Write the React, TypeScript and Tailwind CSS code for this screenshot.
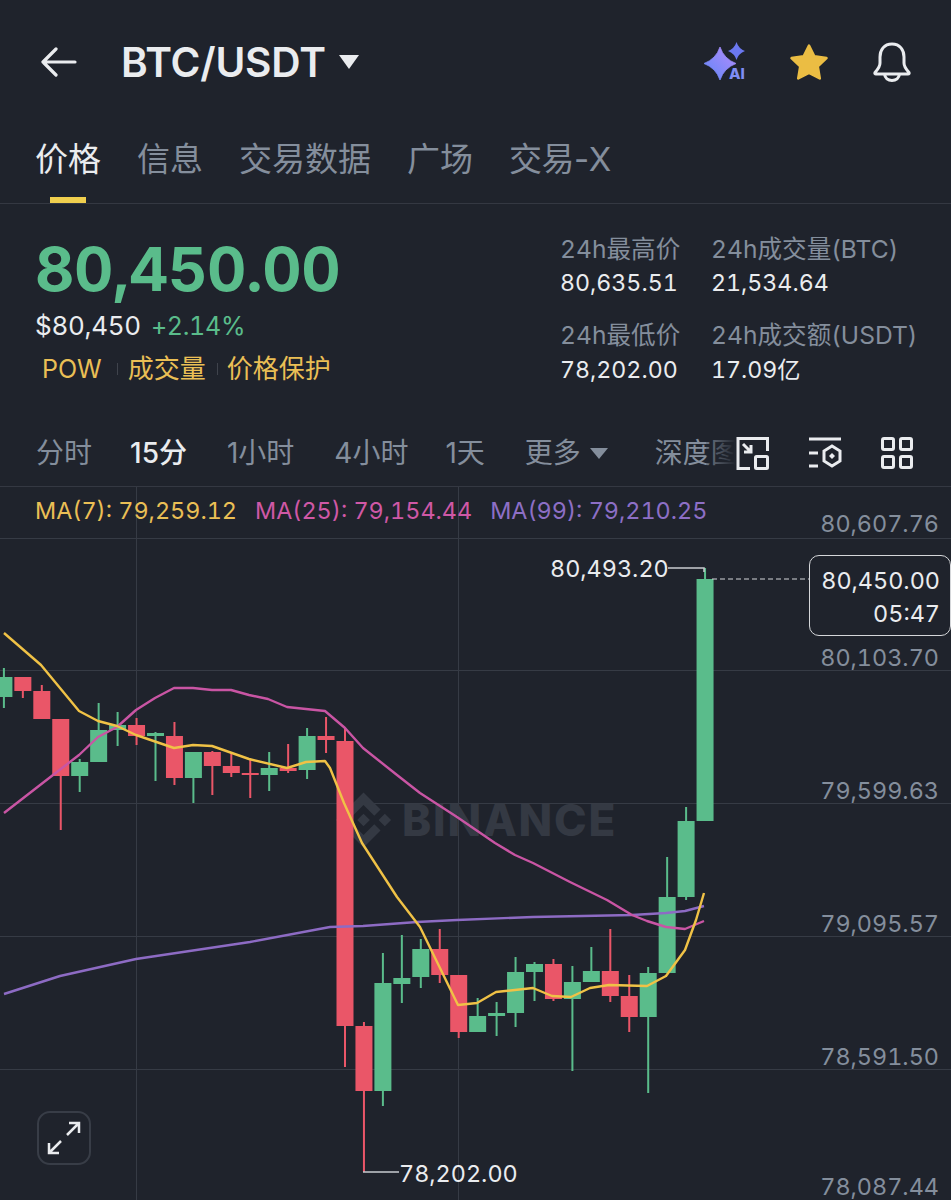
import React from "react";

type C = [number, number, number, number, "g" | "r"];
const candles: C[] = [
  [668, 677, 697, 708, "g"],[677, 677, 691, 698, "r"],[685, 691, 719, 719, "r"],[719, 719, 776, 830, "r"],
  [759, 762, 776, 792, "g"],[703, 730, 762, 762, "g"],[712, 725, 730, 746, "g"],[718, 725, 736, 745, "r"],
  [732, 733, 736, 781, "g"],[722, 736, 778, 785, "r"],[752, 752, 778, 803, "g"],[751, 752, 766, 795, "r"],
  [753, 766, 773, 777, "r"],[760, 773, 775, 798, "r"],[752, 768, 775, 791, "g"],[744, 768, 771, 773, "r"],
  [728, 736, 770, 779, "g"],[717, 736, 740, 753, "r"],[728, 741, 1026, 1067, "r"],[1022, 1026, 1091, 1172, "r"],
  [953, 983, 1091, 1106, "g"],[935, 978, 984, 1003, "g"],[939, 949, 977, 988, "g"],[929, 949, 975, 983, "r"],
  [975, 975, 1032, 1038, "r"],[998, 1016, 1032, 1032, "g"],[1002, 1013, 1016, 1036, "g"],[957, 972, 1013, 1027, "g"],
  [962, 964, 972, 1001, "g"],[959, 964, 999, 1001, "r"],[966, 982, 999, 1071, "g"],[947, 971, 982, 982, "g"],
  [929, 971, 996, 1002, "r"],[975, 996, 1017, 1032, "r"],[967, 973, 1017, 1093, "g"],[857, 897, 973, 973, "g"],
  [807, 821, 897, 900, "g"],[568, 579, 821, 821, "g"],
];
const GREEN = "#5abc8b";
const RED = "#ea5668";
const ma7 = "4,633 41,665 60,688 79,711 98,721 117,726 136,735 174,748 193,745 212,746 249,759 287,768 306,762 325,761 330,768 344,803 362,843 397,897 420,927 458,1005 477,1003 496,992 533,988 552,996 571,997 590,988 609,985 647,986 666,976 685,950 696,920 704,893";
const ma25 = "4,813 53,775 79,755 98,737 117,727 136,710 155,698 174,688 193,688 212,690 231,690 249,695 268,699 287,707 306,709 325,711 345,728 363,748 397,775 420,793 457,817 495,843 515,855 533,863 570,882 607,900 632,915 647,921 666,927 685,929 704,921";
const ma99 = "4,994 60,976 136,959 250,942 330,927 363,926 417,922 457,920 533,917 632,915 666,913 685,911 704,906";

const hLines = [538, 670, 803, 936, 1069];
const axis: [string, string][] = [
  ["80,607.76", "top-[25px]"],["80,103.70", "top-[159px]"],["79,599.63", "top-[292px]"],
  ["79,095.57", "top-[425px]"],["78,591.50", "top-[558px]"],["78,087.44", "top-[688px]"],
];
const sans = "font-['Inter','Noto_Sans_CJK_SC',sans-serif]";

function Chart() {
  return (
    <svg className="absolute inset-0" width="951" height="713" viewBox="0 487 951 713">
      {hLines.map((y) => <line key={y} x1="0" x2="951" y1={y + 0.5} y2={y + 0.5} stroke="#363b45" strokeWidth="1" />)}
      {[136, 458].map((x) => <line key={x} x1={x + 0.5} x2={x + 0.5} y1="487" y2="1200" stroke="#363b45" strokeWidth="1" />)}
      <g fill="#343943">
        <path
          transform="translate(336 792.5) scale(0.437)"
          d="M38.4 53.2 63 28.6l24.6 24.6 14.3-14.3L63 0 24.1 38.9zM0 63l14.3-14.3L28.6 63 14.3 77.3zM38.4 72.8 63 97.4l24.6-24.6 14.3 14.3L63 126 24.1 87.1zM97.4 63l14.3-14.3L126 63l-14.3 14.3zM77.500 63 63 48.500 52.300 59.200l-1.200 1.200L48.600 63 63 77.400 77.500 63z"
        />
        <text x="402" y="836" fontFamily="Inter, sans-serif" fontWeight="800" fontSize="44" letterSpacing="1.8">BINANCE</text>
      </g>
      {candles.map(([h, t, b, l, k], i) => {
        const x = 3.9 + 18.95 * i;
        const c = k === "g" ? GREEN : RED;
        return (
          <g key={i} fill={c}>
            <rect x={x - 1} y={h} width="2" height={l - h} />
            <rect x={x - 8.5} y={t} width="17" height={b - t} />
          </g>
        );
      })}
      <polyline points={ma99} fill="none" stroke="#8d6bc4" strokeWidth="2.4" strokeLinejoin="round" />
      <polyline points={ma25} fill="none" stroke="#c955a4" strokeWidth="2.4" strokeLinejoin="round" />
      <polyline points={ma7} fill="none" stroke="#f0c246" strokeWidth="2.4" strokeLinejoin="round" />
      <line x1="712" x2="809" y1="579" y2="579" stroke="#d5d7da" strokeWidth="1" strokeDasharray="5 3" />
      <path d="M668 568H704V572" fill="none" stroke="#c9ccd0" strokeWidth="1.5" />
      <path d="M363 1172H399" fill="none" stroke="#c9ccd0" strokeWidth="1.5" />
    </svg>
  );
}

function AiIcon() {
  return (
    <svg width="44" height="40" viewBox="0 0 44 40">
      <defs>
        <linearGradient id="ai" x1="0" y1="1" x2="1" y2="0">
          <stop offset="0" stopColor="#5f86f7" />
          <stop offset="1" stopColor="#b58cfa" />
        </linearGradient>
      </defs>
      <path d="M16 5Q20 17 32 21.500Q20 26 16 38Q12 26 0 21.500Q12 17 16 5Z" fill="url(#ai)" stroke="url(#ai)" strokeWidth="0.8" strokeLinejoin="round" />
      <path d="M32.500 0Q34.500 6.500 41 9Q34.500 11.500 32.500 18Q30.500 11.500 24 9Q30.500 6.500 32.500 0Z" fill="#6b78f0" />
      <text x="25" y="37" fontFamily="Inter, sans-serif" fontWeight="800" fontSize="15" fill="#7f8df5">AI</text>
    </svg>
  );
}

export default function App() {
  return (
    <div className={`w-[951px] h-[1200px] overflow-hidden bg-[#1f232c] flex flex-col ${sans} tabular-nums`}>
      <header className="h-[125px] flex items-start shrink-0">
        <div className="flex items-center h-[42px] mt-[41px] w-full">
          <svg className="ml-[41px]" width="36" height="30" viewBox="0 0 36 30" fill="none" stroke="#eaecef" strokeWidth="3.2" strokeLinecap="round" strokeLinejoin="round">
            <path d="M2 15H34M15 2 2 15 15 28" />
          </svg>
          <span className="ml-[44px] mt-[2px] text-[40.6px] leading-none font-semibold text-[#eaecef] tracking-[-0.2px]">BTC/USDT</span>
          <span className="ml-[13px] w-0 h-0 border-l-[10.5px] border-r-[10.5px] border-t-[14px] border-l-transparent border-r-transparent border-t-[#eaecef]" />
          <div className="ml-auto flex items-center mr-[39px]">
            <AiIcon />
            <svg className="ml-[41px]" width="40" height="38" viewBox="0 0 40 38">
              <path d="M20 2.500 25.300 13.300 37.500 15 28.800 23.400 30.800 35.500 20 29.800 9.200 35.500 11.200 23.400 2.500 15 14.700 13.300Z" fill="#ebbd43" stroke="#ebbd43" strokeWidth="2.500" strokeLinejoin="round" />
            </svg>
            <svg className="ml-[43px]" width="40" height="40" viewBox="0 0 40 40" fill="none" stroke="#eaecef" strokeWidth="3" strokeLinejoin="round">
              <path d="M20 2C12 2 8 8 8 15V21C8 25 6 27 3 30.500C2.500 31.500 3 32 4 32H36C37 32 37.500 31.500 37 30.500C34 27 32 25 32 21V15C32 8 28 2 20 2Z" />
              <path d="M12.500 32C13 36 16 38.500 20 38.500S27 36 27.500 32" />
            </svg>
          </div>
        </div>
      </header>

      <nav className="h-[79px] shrink-0 border-b border-[#343842] relative flex items-start pl-[35px] gap-[36px] text-[33px] leading-none text-[#848e9c] normal-nums">
        <span className="mt-[18px] text-[#eaecef]">价格</span>
        <span className="mt-[18px]">信息</span>
        <span className="mt-[18px]">交易数据</span>
        <span className="mt-[18px]">广场</span>
        <span className="mt-[18px] tracking-[-0.5px]">交易-X</span>
        <span className="absolute left-[50px] bottom-0 w-[36px] h-[6px] bg-[#f0cf4e]" />
      </nav>

      <section className="h-[204px] shrink-0 relative flex">
        <div className="pl-[35px] w-[560px] shrink-0">
          <div className="mt-[30px] text-[61px] leading-[70px] font-bold text-[#5abc8b] tracking-[-0.4px]">80,450.00</div>
          <div className="mt-[7px] flex items-center h-[30px] text-[26px] leading-none tracking-[-0.3px]">
            <span className="text-[#eaecef]">$80,450</span>
            <span className="ml-[10px] text-[25px] text-[#5abc8b]">+2.14%</span>
          </div>
          <div className="mt-[13px] flex items-center h-[30px] text-[26px] leading-none text-[#eabf55]">
            <span className="ml-[7px] text-[25px]">POW</span>
            <span className="ml-[15px] w-[1px] h-[12px] bg-[#3f434c]" />
            <span className="ml-[10px]">成交量</span>
            <span className="ml-[11px] w-[1px] h-[12px] bg-[#3f434c]" />
            <span className="ml-[9px]">价格保护</span>
          </div>
        </div>
        <div className="w-[151px] shrink-0 text-[24.6px] leading-[30px] pt-[30px]">
          <div className="text-[#848e9c]">24h最高价</div>
          <div className="mt-[4px] text-[23.2px] text-[#eaecef]">80,635.51</div>
          <div className="mt-[22px] text-[#848e9c]">24h最低价</div>
          <div className="mt-[5px] text-[23.2px] text-[#eaecef]">78,202.00</div>
        </div>
        <div className="text-[24.6px] leading-[30px] pt-[30px] whitespace-nowrap">
          <div className="text-[#848e9c]">24h成交量(BTC)</div>
          <div className="mt-[4px] text-[23.2px] text-[#eaecef]">21,534.64</div>
          <div className="mt-[22px] text-[#848e9c]">24h成交额(USDT)</div>
          <div className="mt-[5px] text-[23.2px] text-[#eaecef]">17.09亿</div>
        </div>
      </section>

      <div className="h-[79px] shrink-0 relative text-[28px] leading-none text-[#848e9c] border-b border-[#343842] normal-nums">
        <div className="flex items-center h-[46px] mt-[22px] pl-[36px] whitespace-nowrap w-[745px]">
          <span>分时</span>
          <span className="ml-[38px] text-[#eaecef] font-medium">15分</span>
          <span className="ml-[40px]">1小时</span>
          <span className="ml-[40px]">4小时</span>
          <span className="ml-[37px]">1天</span>
          <span className="ml-[40px]">更多</span>
          <span className="ml-[9px] w-0 h-0 border-l-[9px] border-r-[9px] border-t-[11px] border-l-transparent border-r-transparent border-t-[#848e9c]" />
          <span className="ml-[47px]">深度图</span>
        </div>
        <div className="absolute left-[706px] top-[20px] h-[50px] w-[30px] bg-gradient-to-r from-[#1f232c]/20 to-[#1f232c]" />
        <div className="absolute right-[38px] top-[22px] h-[50px] pt-[7px] flex items-start gap-[39px] bg-[#1f232c]">
          <svg width="33" height="33" viewBox="0 0 33 33" fill="none" stroke="#eaecef" strokeWidth="3">
            <path d="M14 31.500H2V1.500H31.500V14" />
            <rect x="19.500" y="19.500" width="12" height="12" rx="1" />
            <path d="M7 7 15 15M15 8V15H8" />
          </svg>
          <svg width="34" height="33" viewBox="0 0 34 33" fill="none" stroke="#eaecef" strokeWidth="3">
            <path d="M1 2H33M1 16H10M1 29H10" />
            <path d="M24 9 32 14V24L24 29 16 24V14Z" />
            <path d="M24 16 27 19 24 22 21 19Z" fill="#eaecef" stroke="none" />
          </svg>
          <svg width="32" height="32" viewBox="0 0 32 32" fill="none" stroke="#eaecef" strokeWidth="3">
            <rect x="1.500" y="1.500" width="11" height="11" rx="1.500" />
            <rect x="19.500" y="1.500" width="11" height="11" rx="1.500" />
            <rect x="1.500" y="19.500" width="11" height="11" rx="1.500" />
            <rect x="19.500" y="19.500" width="11" height="11" rx="1.500" />
          </svg>
        </div>
      </div>

      <div className="relative flex-1 text-[23.4px] leading-none">
        <Chart />
        <div className="absolute left-[35px] top-[12px] flex gap-[18px] whitespace-nowrap text-[23.4px]">
          <span className="text-[#eabf55]">MA(7): 79,259.12</span>
          <span className="text-[#cf58a6]">MA(25): 79,154.44</span>
          <span className="text-[#8d6fc6]">MA(99): 79,210.25</span>
        </div>
        {axis.map(([t, cls]) => (
          <span key={t} className={`absolute right-[12px] ${cls} text-[#848e9c]`}>{t}</span>
        ))}
        <span className="absolute left-[550px] top-[70px] text-[#eaecef]">80,493.20</span>
        <span className="absolute left-[399px] top-[675px] text-[#eaecef]">78,202.00</span>
        <div className="absolute left-[809px] top-[68px] w-[142px] h-[81px] rounded-[10px] border-[1.5px] border-[#d5d7da] bg-[#1f232c] flex flex-col items-end justify-center pt-[3px] pr-[10px] gap-[9px] text-[#eaecef]">
          <span>80,450.00</span>
          <span>05:47</span>
        </div>
        <div className="absolute left-[37px] top-[624px] w-[54px] h-[54px] rounded-[13px] border-2 border-[#383d47] flex items-center justify-center">
          <svg width="34" height="34" viewBox="0 0 34 34" fill="none" stroke="#eaecef" strokeWidth="2.500">
            <path d="M20 14 32 2M22 2H32V12M14 20 2 32M2 22V32H12" />
          </svg>
        </div>
      </div>
    </div>
  );
}
